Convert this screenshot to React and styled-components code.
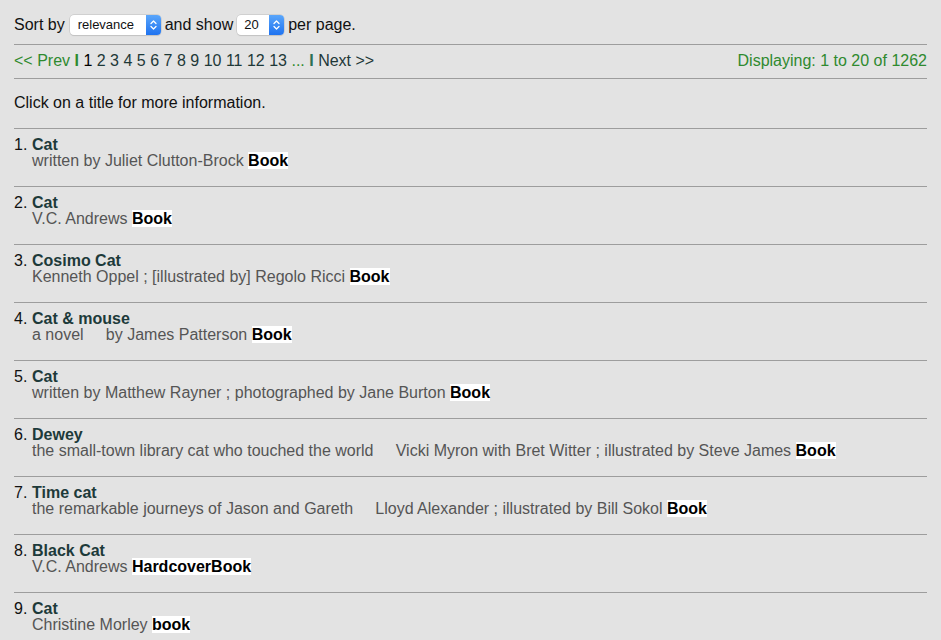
import React from "react";
import styled, { createGlobalStyle } from "styled-components";

const Global = createGlobalStyle`
  html, body { margin: 0; padding: 0; background: #e3e3e3; }
  body {
    font-family: "Liberation Sans", Arial, Helvetica, sans-serif;
    font-size: 16px;
    line-height: 16px;
    color: #111;
  }
`;

const Page = styled.div`
  padding: 0 14px;
`;

const Toolbar = styled.div`
  display: flex;
  align-items: center;
  height: 20px;
  padding: 15px 0 9px;
  border-bottom: 1px solid #9d9d9d;
  white-space: pre;
`;

const SelectBox = styled.span`
  display: inline-flex;
  align-items: stretch;
  height: 20px;
  width: ${(p) => p.$w}px;
  box-sizing: border-box;
  margin: 0 ${(p) => p.$mr || 0}px 0 ${(p) => p.$ml || 0}px;
  background: #fff;
  border-radius: 4px;
  box-shadow: 0 0 0 0.5px #bdbdbd, 0 1px 1px rgba(0,0,0,0.12);
  overflow: hidden;
  font-size: 13px;
  color: #111;
`;

const SelectValue = styled.span`
  flex: 1;
  display: flex;
  align-items: center;
  padding-left: ${(p) => p.$pl}px;
`;

const Stepper = styled.span`
  width: 15px;
  display: flex;
  align-items: center;
  justify-content: center;
  background: linear-gradient(#5aa6fb, #1f73f0);
`;

const Pager = styled.div`
  display: flex;
  justify-content: space-between;
  padding: 8px 0 9px;
  border-bottom: 1px solid #9d9d9d;
  white-space: pre;
`;

const Green = styled.span`
  color: ${(p) => p.$tone || "#2f8a2f"};
  font-weight: ${(p) => (p.$bold ? "bold" : "normal")};
`;

const PageNum = styled.span`
  color: ${(p) => (p.$current ? "#000" : "#1e3838")};
`;

const Info = styled.div`
  padding: 16px 0 17px;
  border-bottom: 1px solid #9d9d9d;
`;

const List = styled.ol`
  list-style: none;
  margin: 0;
  padding: 0;
`;

const Item = styled.li`
  padding: 8px 0 17px;
  border-bottom: 1px solid #9d9d9d;
  display: grid;
  grid-template-columns: 18px 1fr;
  &:last-child { border-bottom: none; }
`;

const Num = styled.span`
  color: #111;
`;

const Title = styled.a`
  display: block;
  color: #1d3a3a;
  font-weight: bold;
  text-decoration: none;
`;

const Byline = styled.div`
  grid-column: 2;
  color: #555;
  white-space: pre;
`;

const Format = styled.span`
  background: #fff;
  color: #000;
  font-weight: bold;
`;

const Chevrons = () => (
  <svg width="7" height="12" viewBox="0 0 7 12" fill="none">
    <path d="M1 4.5 L3.5 2 L6 4.5" stroke="#fff" strokeWidth="1.3" strokeLinecap="round" strokeLinejoin="round" />
    <path d="M1 7.5 L3.5 10 L6 7.5" stroke="#fff" strokeWidth="1.3" strokeLinecap="round" strokeLinejoin="round" />
  </svg>
);

const Select = ({ value, w, pl, ml, mr }) => (
  <SelectBox $w={w} $ml={ml} $mr={mr}>
    <SelectValue $pl={pl}>{value}</SelectValue>
    <Stepper><Chevrons /></Stepper>
  </SelectBox>
);

const items = [
  { title: "Cat", by: "written by Juliet Clutton-Brock", fmt: "Book" },
  { title: "Cat", by: "V.C. Andrews", fmt: "Book" },
  { title: "Cosimo Cat", by: "Kenneth Oppel ; [illustrated by] Regolo Ricci", fmt: "Book" },
  { title: "Cat & mouse", by: "a novel     by James Patterson", fmt: "Book" },
  { title: "Cat", by: "written by Matthew Rayner ; photographed by Jane Burton", fmt: "Book" },
  { title: "Dewey", by: "the small-town library cat who touched the world     Vicki Myron with Bret Witter ; illustrated by Steve James", fmt: "Book" },
  { title: "Time cat", by: "the remarkable journeys of Jason and Gareth     Lloyd Alexander ; illustrated by Bill Sokol", fmt: "Book" },
  { title: "Black Cat", by: "V.C. Andrews", fmt: "HardcoverBook" },
  { title: "Cat", by: "Christine Morley", fmt: "book" },
];

const pages = ["2", "3", "4", "5", "6", "7", "8", "9", "10", "11", "12", "13"];

export default function App() {
  return (
    <>
      <Global />
      <Page>
        <Toolbar>
          Sort by
          <Select value="relevance" w={91} pl={8} ml={5} mr={4} />
          and show
          <Select value="20" w={47} pl={7} ml={4} mr={4} />
          per page.
        </Toolbar>
        <Pager>
          <span>
            <Green>{"<< Prev "}</Green>
            <Green $bold>I</Green>{" "}
            <PageNum $current>1</PageNum>{" "}
            {pages.map((p) => (
              <React.Fragment key={p}>
                <PageNum>{p}</PageNum>{" "}
              </React.Fragment>
            ))}
            <Green>...</Green>{" "}
            <Green $bold $tone="#2b6f55">I</Green>{" "}
            <PageNum>{"Next >>"}</PageNum>
          </span>
          <Green>Displaying: 1 to 20 of 1262</Green>
        </Pager>
        <Info>Click on a title for more information.</Info>
        <List>
          {items.map((it, i) => (
            <Item key={i}>
              <Num>{i + 1}.</Num>
              <Title href="#">{it.title}</Title>
              <Byline>
                {it.by} <Format>{it.fmt}</Format>
              </Byline>
            </Item>
          ))}
        </List>
      </Page>
    </>
  );
}
